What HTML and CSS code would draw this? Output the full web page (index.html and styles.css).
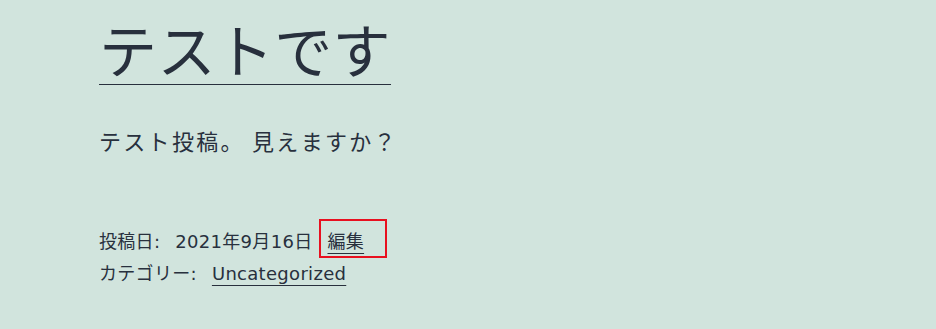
FILE: index.html
```html
<!DOCTYPE html>
<html lang="ja">
<head>
  <meta charset="UTF-8" />
  <meta name="viewport" content="width=device-width, initial-scale=1.0"/>
  <title>テストです</title>
  <link rel="stylesheet" href="styles.css">
</head>
<body>

  <article class="post">
    <header class="entry-header">
      <h1 class="entry-title"><a href="#">テストです</a></h1>
    </header>

    <div class="entry-content">
      <p>テスト投稿。 見えますか？</p>
    </div>

    <footer class="entry-footer">
      <div class="posted-on">
        <span class="meta-label">投稿日:</span> 2021年9月16日
        <span class="edit-link"><a href="#">編集</a></span>
      </div>
      <div class="cat-links">
        <span class="meta-label">カテゴリー:</span> <a href="#">Uncategorized</a>
      </div>
    </footer>
  </article>

</body>
</html>
```

FILE: styles.css
```css
* {
  box-sizing: border-box;
}

body {
  margin: 0;
  background-color: #d1e4dd;
  color: #28303d;
  font-family: "Noto Sans CJK JP", "Noto Sans", sans-serif;
}

a {
  color: #28303d;
  text-decoration: underline;
  text-decoration-thickness: 1px;
}

.post {
  padding: 12px 0 0 99px;
}

.entry-title {
  margin: 0;
  font-size: 58px;
  font-weight: 400;
  letter-spacing: 0.4px;
  line-height: 72px;
}

.entry-title a {
  text-underline-offset: 11px;
}

.entry-content p {
  margin: 40px 0 0;
  font-size: 22px;
  letter-spacing: 2.3px;
  line-height: 32px;
}

/* Latin text in the meta is wide, like Verdana */
.entry-footer {
  margin-top: 70px;
  font-family: "DejaVu Sans", "Noto Sans CJK JP", sans-serif;
  font-size: 18px;
  letter-spacing: 0.3px;
  line-height: 32px;
}

.meta-label {
  margin-right: 9px;
}

.entry-footer a {
  text-underline-offset: 5px;
}

/* red annotation box drawn over the edit link */
.edit-link {
  position: relative;
  margin-left: 9px;
}

.edit-link::after {
  content: "";
  position: absolute;
  top: -12px;
  bottom: -6px;
  left: -8px;
  right: -23px;
  border: 2px solid #e8101f;
}
```
